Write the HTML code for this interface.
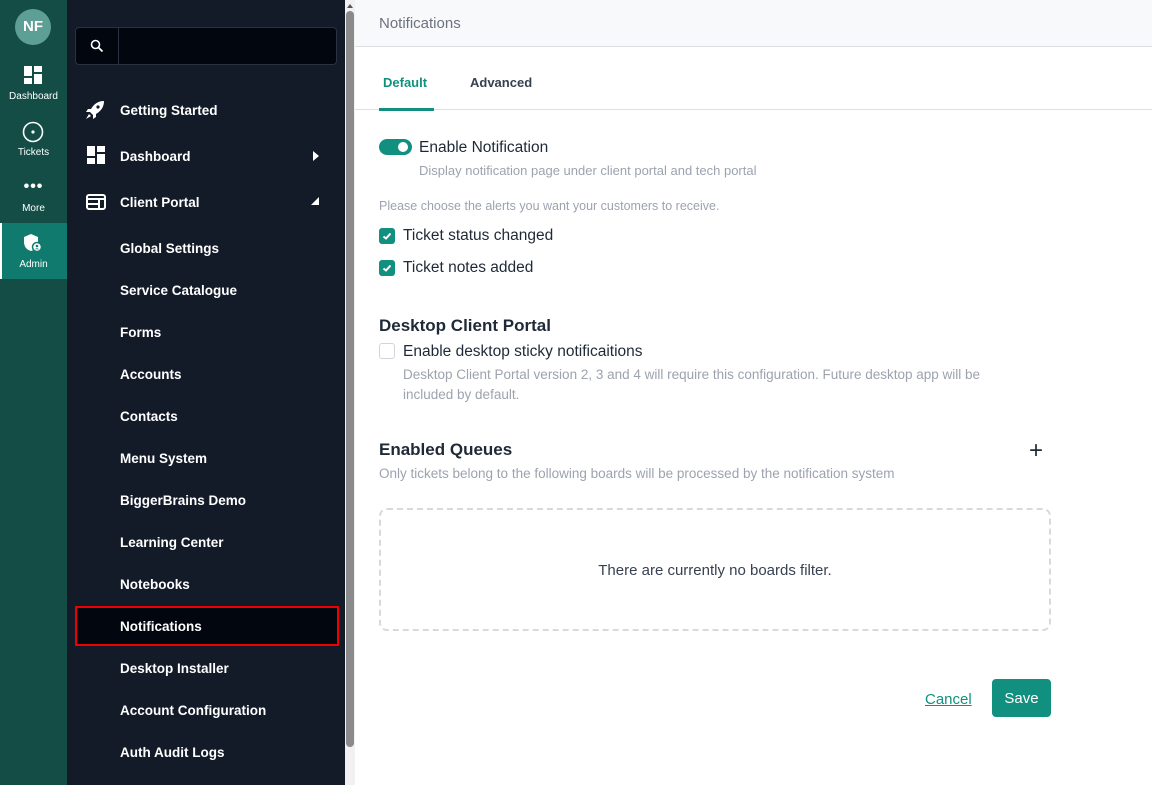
<!DOCTYPE html>
<html><head><meta charset="utf-8"><style>
*{box-sizing:border-box;margin:0;padding:0}
body{width:1152px;height:785px;overflow:hidden;position:relative;background:#fff;font-family:"Liberation Sans",sans-serif}
.abs{position:absolute}
#rail{left:0;top:0;width:67px;height:785px;background:#144d46}
.ri{position:absolute;left:0;width:67px;text-align:center;color:#fff;font-size:10px}
#side{left:67px;top:0;width:278px;height:785px;background:#131a28}
.mi{position:absolute;left:53px;color:#fff;font-weight:bold;font-size:13.5px;line-height:20px;margin-top:1px}
#main{left:355px;top:0;width:797px;height:785px}
.t{position:absolute;white-space:nowrap;margin-top:1px}
.cb{position:absolute;width:16px;height:16px;border-radius:3px;background:#12907f}
</style></head><body>
<div id="rail" class="abs">
 <div class="abs" style="left:15px;top:9px;width:36px;height:36px;border-radius:50%;background:#5e9f95;color:#fff;font-size:15px;font-weight:bold;text-align:center;line-height:36px">NF</div>
 <svg class="abs" style="left:24px;top:66px" width="18" height="18" viewBox="0 0 18 18" fill="#fff"><rect x="0" y="0" width="8" height="10"/><rect x="10" y="0" width="8" height="6"/><rect x="0" y="12" width="8" height="6"/><rect x="10" y="8" width="8" height="10"/></svg>
 <div class="ri" style="top:91px">Dashboard</div>
 <svg class="abs" style="left:22px;top:121px" width="22" height="22"><circle cx="11" cy="11" r="9.5" stroke="#fff" stroke-width="1.6" fill="none"/><circle cx="11" cy="11" r="1.6" fill="#fff"/></svg>
 <div class="ri" style="top:147px">Tickets</div>
 <div class="ri" style="top:178px;font-size:16px;font-weight:bold;letter-spacing:1px">•••</div>
 <div class="ri" style="top:203px">More</div>
 <div class="abs" style="left:0;top:223px;width:67px;height:56px;background:#0f7a6d;border-left:2px solid #fff"></div>
 <svg class="abs" style="left:23px;top:233px" width="20" height="20" viewBox="0 0 20 20"><path d="M8 1 L15 4 V9 C15 14 12 17 8 18 C4 17 1 14 1 9 V4 Z" fill="#fff"/><circle cx="14" cy="14" r="4.5" fill="#fff" stroke="#0f7a6d" stroke-width="1.5"/><circle cx="14" cy="13" r="1.3" fill="#0f7a6d"/><path d="M11.8 16.2 Q14 14.2 16.2 16.2" fill="#0f7a6d"/></svg>
 <div class="ri" style="top:259px">Admin</div>
</div>
<div id="side" class="abs">
 <div class="abs" style="left:8px;top:27px;width:262px;height:38px;border:1px solid #2a3140;border-radius:4px;background:#02060f"></div>
 <div class="abs" style="left:51px;top:28px;width:1px;height:36px;background:#2a3140"></div>
 <svg class="abs" style="left:23px;top:39px" width="14" height="14"><circle cx="5.5" cy="5.5" r="4" stroke="#fff" stroke-width="1.6" fill="none"/><line x1="8.5" y1="8.5" x2="12.5" y2="12.5" stroke="#fff" stroke-width="1.8"/></svg>
 <svg class="abs" style="left:18px;top:100px" width="20" height="20" viewBox="0 0 20 20" fill="#fff"><path d="M19 1 C13 1 9 4 6 9 L3 9 L1 12 L5 12 L8 15 L8 19 L11 17 L11 14 C16 11 19 7 19 1Z"/><circle cx="13" cy="7" r="1.6" fill="#131a28"/><path d="M4 14 L1 19 L6 16Z"/></svg>
 <div class="mi" style="top:100px">Getting Started</div>
 <svg class="abs" style="left:20px;top:146px" width="18" height="18" viewBox="0 0 18 18" fill="#fff"><rect x="0" y="0" width="8" height="10"/><rect x="10" y="0" width="8" height="6"/><rect x="0" y="12" width="8" height="6"/><rect x="10" y="8" width="8" height="10"/></svg>
 <div class="mi" style="top:146px">Dashboard</div>
 <svg class="abs" style="left:246px;top:151px" width="6" height="10"><path d="M0 0 L6 5 L0 10Z" fill="#fff"/></svg>
 <svg class="abs" style="left:19px;top:194px" width="20" height="16" viewBox="0 0 20 16"><rect x="1" y="1" width="18" height="14" rx="2" fill="none" stroke="#fff" stroke-width="2"/><rect x="1" y="4" width="18" height="2" fill="#fff"/><rect x="12" y="6" width="2" height="8" fill="#fff"/><rect x="2" y="9" width="10" height="2" fill="#fff"/></svg>
 <div class="mi" style="top:192px">Client Portal</div>
 <svg class="abs" style="left:244px;top:197px" width="8" height="8"><path d="M8 0 L8 8 L0 8Z" fill="#fff"/></svg>
 <div class="mi" style="top:238px">Global Settings</div>
 <div class="mi" style="top:280px">Service Catalogue</div>
 <div class="mi" style="top:322px">Forms</div>
 <div class="mi" style="top:364px">Accounts</div>
 <div class="mi" style="top:406px">Contacts</div>
 <div class="mi" style="top:448px">Menu System</div>
 <div class="mi" style="top:490px">BiggerBrains Demo</div>
 <div class="mi" style="top:532px">Learning Center</div>
 <div class="mi" style="top:574px">Notebooks</div>
 <div class="abs" style="left:8px;top:606px;width:264px;height:40px;background:#02060f;border:2px solid #e00"></div>
 <div class="mi" style="top:616px">Notifications</div>
 <div class="mi" style="top:658px">Desktop Installer</div>
 <div class="mi" style="top:700px">Account Configuration</div>
 <div class="mi" style="top:742px">Auth Audit Logs</div>
</div>
<div class="abs" style="left:345px;top:0;width:10px;height:785px;background:#f1f1f1"></div>
<svg class="abs" style="left:346px;top:3px" width="8" height="6"><path d="M4 1 L7 5 L1 5Z" fill="#555"/></svg>
<div class="abs" style="left:346px;top:11px;width:8px;height:736px;background:#8a8a8a;border-radius:4px"></div>
<div id="main" class="abs">
 <div class="abs" style="left:0;top:0;width:797px;height:47px;background:#f8f9fa;border-bottom:1px solid #dcdfe3"></div>
 <div class="t" style="left:24px;top:14px;font-size:15px;color:#6b7280">Notifications</div>
 <div class="t" style="left:28px;top:74px;font-size:13px;font-weight:bold;color:#12907f">Default</div>
 <div class="t" style="left:115px;top:74px;font-size:13px;font-weight:bold;color:#374151">Advanced</div>
 <div class="abs" style="left:0;top:109px;width:797px;height:1px;background:#dcdfe3"></div>
 <div class="abs" style="left:24px;top:108px;width:55px;height:3px;background:#12907f"></div>
 <div class="abs" style="left:24px;top:139px;width:33px;height:16px;border-radius:8px;background:#12907f"></div>
 <div class="abs" style="left:43px;top:142px;width:10px;height:10px;border-radius:50%;background:#fff"></div>
 <div class="t" style="left:64px;top:138px;font-size:15.5px;color:#1f2937">Enable Notification</div>
 <div class="t" style="left:64px;top:162px;font-size:13px;color:#9ca3af">Display notification page under client portal and tech portal</div>
 <div class="t" style="left:24px;top:198px;font-size:12.5px;color:#9ca3af">Please choose the alerts you want your customers to receive.</div>
 <div class="cb" style="left:24px;top:228px"><svg width="16" height="16"><path d="M4.5 8.5 L7 10.5 L11.5 5.5" stroke="#fff" stroke-width="2" fill="none"/></svg></div>
 <div class="t" style="left:48px;top:226px;font-size:15.5px;color:#1f2937">Ticket status changed</div>
 <div class="cb" style="left:24px;top:260px"><svg width="16" height="16"><path d="M4.5 8.5 L7 10.5 L11.5 5.5" stroke="#fff" stroke-width="2" fill="none"/></svg></div>
 <div class="t" style="left:48px;top:258px;font-size:15.5px;color:#1f2937">Ticket notes added</div>
 <div class="t" style="left:24px;top:315px;font-size:17px;font-weight:bold;color:#1f2937">Desktop Client Portal</div>
 <div class="abs" style="left:24px;top:343px;width:16px;height:16px;border:1px solid #d1d5db;border-radius:3px"></div>
 <div class="t" style="left:48px;top:342px;font-size:15.5px;color:#1f2937">Enable desktop sticky notificaitions</div>
 <div class="t" style="left:48px;top:364px;font-size:13.5px;color:#9ca3af;line-height:20px">Desktop Client Portal version 2, 3 and 4 will require this configuration. Future desktop app will be<br>included by default.</div>
 <div class="t" style="left:24px;top:439px;font-size:17px;font-weight:bold;color:#1f2937">Enabled Queues</div>
 <div class="t" style="left:674px;top:436px;font-size:24px;color:#1f2937;font-weight:300">+</div>
 <div class="t" style="left:24px;top:465px;font-size:13.5px;color:#9ca3af">Only tickets belong to the following boards will be processed by the notification system</div>
 <div class="abs" style="left:24px;top:508px;width:672px;height:123px;border:2px dashed #d6d9de;border-radius:8px"></div>
 <div class="t" style="left:24px;top:561px;width:672px;text-align:center;font-size:15px;color:#374151">There are currently no boards filter.</div>
 <div class="t" style="left:570px;top:690px;font-size:15px;color:#12907f;text-decoration:underline">Cancel</div>
 <div class="abs" style="left:637px;top:679px;width:59px;height:38px;border-radius:4px;background:#12907f;color:#fff;font-size:15px;text-align:center;line-height:40px">Save</div>
</div>
</body></html>
